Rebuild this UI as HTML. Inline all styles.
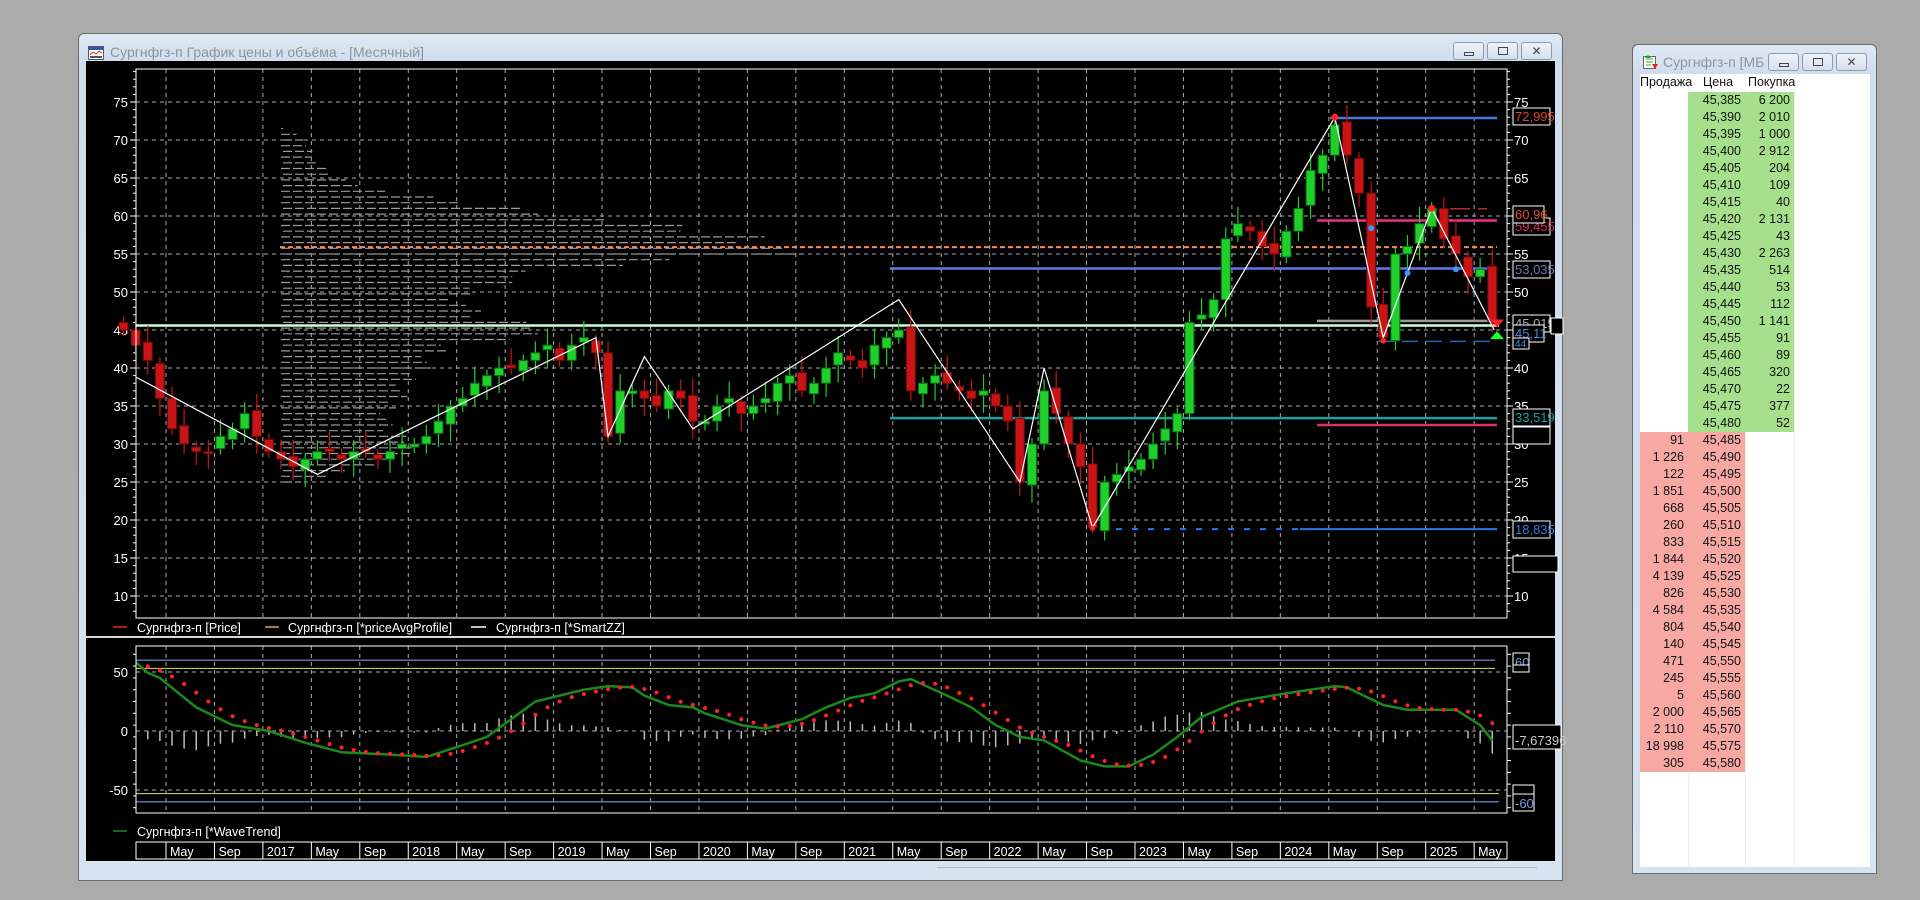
<!DOCTYPE html>
<html><head><meta charset="utf-8">
<style>
*{margin:0;padding:0;box-sizing:border-box}
body{width:1920px;height:900px;background:#ababab;position:relative;overflow:hidden;font-family:"Liberation Sans","DejaVu Sans",sans-serif}
.win{position:absolute;border:1px solid #6b6b6b;border-radius:6px 6px 0 0;background:linear-gradient(#dfe9f5,#cfdcec 30px,#d6e3f1);}
.title{position:absolute;font-size:14px;color:#8c939c;white-space:nowrap}
.btn{position:absolute;height:18px;width:31px;border:1px solid #8c9cb0;border-radius:3px;background:linear-gradient(#eef3f9,#d5dfeb)}
.ob{position:absolute;left:1640px;top:74px;width:230px;height:793px;background:#fff;font-size:12.5px;color:#111}
.ob .col{position:absolute;top:18px}
.ob .r{height:17px;line-height:17px;text-align:right;padding-right:4px}
</style></head><body>

<div class="win" style="left:78px;top:33px;width:1485px;height:848px"></div>
<svg style="position:absolute;left:88px;top:46px" width="16" height="14"><rect x="0.5" y="0.5" width="15" height="13" fill="#fff" stroke="#557"/><rect x="1" y="1" width="14" height="3" fill="#2a5fa8"/><polyline points="2,9 5,6 8,8 11,5 14,7" fill="none" stroke="#c33"/><rect x="2" y="10" width="12" height="2" fill="#555"/></svg>
<div class="title" style="left:110px;top:44px">Сургнфгз-п График цены и объёма - [Месячный]</div>
<div class="btn" style="left:1453px;top:42px"><div style="position:absolute;left:10px;top:9px;width:10px;height:4px;border:1px solid #445"></div></div>
<div class="btn" style="left:1487px;top:42px"><div style="position:absolute;left:10px;top:4px;width:10px;height:8px;border:1px solid #445"></div></div>
<div class="btn" style="left:1521px;top:42px;font-size:12px;color:#445;text-align:center;line-height:16px">✕</div>
<div style="position:absolute;left:86px;top:61px;width:1469px;height:800px;background:#000"></div>
<div style="position:absolute;left:937px;top:867px;width:600px;height:1px;background:#b8b8b8"></div>

<svg id="ch" style="position:absolute;left:0;top:0" width="1920" height="900" font-family="Liberation Sans, sans-serif"></svg>

<div class="win" style="left:1632px;top:44px;width:245px;height:830px"></div>
<svg style="position:absolute;left:1643px;top:55px" width="16" height="16"><rect x="0.5" y="1.5" width="12" height="12" fill="#fff" stroke="#666"/><path d="M3 4h7M3 7h7M3 10h5" stroke="#3a3"/><path d="M9 9l3 5 3-5z" fill="#d22"/><path d="M2 3l3-3 3 3z" fill="#2a2"/></svg>
<div class="title" style="left:1663px;top:54px">Сургнфгз-п [МБ ...</div>
<div class="btn" style="left:1768px;top:53px"><div style="position:absolute;left:10px;top:9px;width:10px;height:4px;border:1px solid #445"></div></div>
<div class="btn" style="left:1802px;top:53px"><div style="position:absolute;left:10px;top:4px;width:10px;height:8px;border:1px solid #445"></div></div>
<div class="btn" style="left:1836px;top:53px;font-size:12px;color:#445;text-align:center;line-height:16px">✕</div>
<div class="ob">
 <div style="position:absolute;left:48px;top:0;width:1px;height:793px;background:#eee"></div>
 <div style="position:absolute;left:105px;top:0;width:1px;height:793px;background:#eee"></div>
 <div style="position:absolute;left:154px;top:0;width:1px;height:793px;background:#eee"></div>
 <div style="position:absolute;left:0;top:1px;width:48px;font-size:12.5px">Продажа</div>
 <div style="position:absolute;left:63px;top:1px">Цена</div>
 <div style="position:absolute;left:108px;top:1px">Покупка</div>
 <div class="col" id="c1" style="left:0;width:48px"></div>
 <div class="col" id="c2" style="left:48px;width:57px"></div>
 <div class="col" id="c3" style="left:105px;width:49px"></div>
</div>

<script>
(function(){
 var buy=["6 200","2 010","1 000","2 912","204","109","40","2 131","43","2 263","514","53","112","1 141","91","89","320","22","377","52"];
 var sell=["91","1 226","122","1 851","668","260","833","1 844","4 139","826","4 584","804","140","471","245","5","2 000","2 110","18 998","305"];
 var c1="",c2="",c3="";
 for(var i=0;i<40;i++){
  var p=(45.385+i*0.005).toFixed(3).replace(".",",");
  var g=i<20, col=g?"#a6e08c":"#f7a8a3";
  c2+='<div class="r" style="background:'+col+'">'+p+'</div>';
  if(g){c1+='<div class="r"></div>';c3+='<div class="r" style="background:#a6e08c">'+buy[i]+'</div>';}
  else{c1+='<div class="r" style="background:#f7a8a3">'+sell[i-20]+'</div>';}
 }
 document.getElementById("c1").innerHTML=c1;document.getElementById("c2").innerHTML=c2;document.getElementById("c3").innerHTML=c3;
})();
(function(){
 var s="";
 var L=136,R=1507,T=69,B=618;
 function Y(p){return 102+(75-p)*7.6;}
 function X(i){return 166+48.45*((i-4)/4)+6;}
 function line(x1,y1,x2,y2,c,w,d){s+='<line x1="'+x1+'" y1="'+y1+'" x2="'+x2+'" y2="'+y2+'" stroke="'+c+'" stroke-width="'+(w||1)+'"'+(d?' stroke-dasharray="'+d+'"':'')+'/>';}
 function txt(x,y,t,c,sz,a){s+='<text x="'+x+'" y="'+y+'" fill="'+c+'" font-size="'+(sz||13)+'"'+(a?' text-anchor="'+a+'"':'')+'>'+t+'</text>';}
 function rect(x,y,w,h,f,st){s+='<rect x="'+x+'" y="'+y+'" width="'+w+'" height="'+h+'" fill="'+(f||"none")+'"'+(st?' stroke="'+st+'"':'')+'/>';}
 for(var p=10;p<=75;p+=5){line(L,Y(p),R,Y(p),"#aaa",1,"4 4");txt(128,Y(p)+5,p,"#fff",13,"end");txt(1514,Y(p)+5,p,"#fff",13);}
 for(var p=8;p<=79;p++){var k=p%5==0?6:3;line(L-k,Y(p),L,Y(p),"#fff");line(R,Y(p),R+k,Y(p),"#fff");}
 for(var k=0;k<28;k++){var x=166+48.45*k;line(x,T,x,B,"#aaa",1,"4 4");line(x,646,x,813,"#aaa",1,"4 4");}
 var vp=[[71,15],[69,30],[67,40],[65,60],[63,120],[61,250],[60,320],[58,450],[57,520],[56,550],[55,520],[53,300],[52,250],[50,200],[47,200],[45,310],[43,180],[40,150],[37,130],[35,120],[32,110],[30,150],[28,120],[26,60],[25,20]];
 function vl(p){for(var j=0;j<vp.length-1;j++){if(p<=vp[j][0]&&p>=vp[j+1][0]){var t=(vp[j][0]-p)/(vp[j][0]-vp[j+1][0]);return vp[j][1]+(vp[j+1][1]-vp[j][1])*t;}}return 0;}
 var n=0;
 for(var p=71.5;p>=24.5;p-=0.75){var l=vl(p)*(0.85+0.15*((n*7)%5)/4);n++;line(281+(n%2)*2,Y(p),281+l,Y(p),"#9a9a9a",1.2,"9 3");}
 line(L,Y(45.6),R-8,Y(45.6),"#c8ffd8",2.5);
 line(280,Y(55.9),R-10,Y(55.9),"#f08c4c",2,"5 3");
 line(890,Y(53.1),R-10,Y(53.1),"#5a78f0",2.5);
 line(890,Y(33.4),R-10,Y(33.4),"#19a0a0",2.5);
 line(1317,Y(32.5),R-10,Y(32.5),"#e0306a",2.5);
 line(1090,Y(18.8),R-10,Y(18.8),"#2a78e0",2,"");
 line(1090,Y(18.8),1300,Y(18.8),"#000",2,"10 6");
 line(1330,Y(72.9),R-10,Y(72.9),"#4a78e0",2.5);
 line(1317,Y(59.4),R-10,Y(59.4),"#f0308a",2.5);
 line(1317,Y(46.2),R-10,Y(46.2),"#999",2.5);
 line(1378,Y(43.5),R-10,Y(43.5),"#2a60c0",1.5,"16 8");
 line(1450,Y(60.96),R-20,Y(60.96),"#b03020",1.5,"20 8");
 var c=[45,43,41,36,32,30,29,29,31,32,34,31, 29,28,27,28,29,29,28,29,29,28,29,30, 30,31,33,35,36,38,39,40,40,41,42,43, 41,43,44,42,31,37,37,36,35,37,36,33, 33,35,36,34,35,36,38,39,37,38,40,42, 41,40,43,44,45,37,38,39,38,37,36,37, 35,33,25,30,37,34,30,27,19,25,26,27, 28,30,32,34,46,47,49,57,59,58,56,55, 58,61,66,68,72,68,63,48,44,55,56,59, 61,57,55,52,53,46];
 for(var i=0;i<c.length;i++){var cl=c[i],op=(i==0?46:c[i-1]+((i%3)-1)*0.4);var up=cl>op;
  var h=Math.max(op,cl)+0.8+(i%3)*0.7,lo=Math.min(op,cl)-0.8-(i%4)*0.5;var x=X(i);
  var col=up?"#1fcf2a":"#c81414",bc=up?"#0a6a10":"#6a0a0a";
  line(x,Y(h),x,Y(lo),col,1.2);
  var y1=Y(Math.max(op,cl)),hh=Math.max(2,Y(Math.min(op,cl))-y1);
  s+='<rect x="'+(x-4.5)+'" y="'+y1+'" width="9" height="'+hh+'" fill="'+col+'" stroke="'+bc+'"/>';}
 var zz=[[L,38.8],[X(16),26],[X(39),44],[X(40),31],[X(43),41.5],[X(47),32],[X(64),49],[X(74),25],[X(76),40],[X(80),19],[X(100),73],[X(104),44],[X(108),61],[X(113)+2,45]];
 var pts=zz.map(function(q){return q[0]+","+Y(q[1]);}).join(" ");
 s+='<polyline points="'+pts+'" fill="none" stroke="#fff" stroke-width="1.2"/>';
 s+='<circle cx="'+X(100)+'" cy="'+Y(73)+'" r="3.5" fill="#f22"/><circle cx="'+X(108)+'" cy="'+Y(61)+'" r="3.5" fill="#f22"/><circle cx="'+X(104)+'" cy="'+Y(43.6)+'" r="3" fill="#f22"/><circle cx="'+X(80)+'" cy="'+Y(18.9)+'" r="2.5" fill="#f22"/>';
 s+='<circle cx="'+X(103)+'" cy="'+Y(58.4)+'" r="3" fill="#39f"/><circle cx="'+X(106)+'" cy="'+Y(52.5)+'" r="3" fill="#39f"/><circle cx="'+X(110)+'" cy="'+Y(53)+'" r="3" fill="#39f"/>';
 s+='<polygon points="1490,'+(Y(45.6)-6)+' 1504,'+(Y(45.6)-6)+' 1497,'+(Y(45.6)+2)+'" fill="#f22"/><polygon points="1490,'+(Y(44.2)+3)+' 1504,'+(Y(44.2)+3)+' 1497,'+(Y(44.2)-5)+'" fill="#2f2"/>';
 rect(L,T,R-L,B-T,"none","#fff");
 function lab(y,t,c,w){rect(1513,y,w||37,17,"#000","#fff");txt(1515,y+13,t,c,13);}
 lab(108,"72,995","#e0402a");lab(218,"59,455","#e02a6a");lab(206,"60,96","#e0502a",31);lab(261,"53,035","#6a7aba");
 lab(315,"45,015","#aaa");lab(325,"45,11","#4a8ad8",31);rect(1513,338,16,11,"#000","#fff");txt(1515,347,"44","#4a8ad8",10);
 rect(1551,318,12,16,"#000","#fff");
 lab(409,"33,519","#19a0a0");rect(1513,427,37,17,"#000","#fff");lab(521,"18,835","#3a7ad8");rect(1513,556,45,16,"#000","#fff");
 line(113,627,127,627,"#d22",1.5);txt(137,632,"Сургнфгз-п [Price]","#fff",12.5);
 line(265,627,279,627,"#d8a080",1.5);txt(288,632,"Сургнфгз-п [*priceAvgProfile]","#fff",12.5);
 line(471,627,486,627,"#fff",1.5);txt(496,632,"Сургнфгз-п [*SmartZZ]","#fff",12.5);
 rect(86,636,1469,2,"#d8d8d8");
 function V(v){return 731-v*1.18;}
 var IT=646,IB=813;
 line(L,V(0),R,V(0),"#aaa",1,"4 4");line(L,V(50),R,V(50),"#aaa",1,"4 4");line(L,V(-50),R,V(-50),"#aaa",1,"4 4");
 line(L,V(60),R-12,V(60),"#7a96e0",1.2);line(L,V(53),R-12,V(53),"#c8c850",1.2);line(L,V(-53),R-8,V(-53),"#c8c850",1.2);line(L,V(-60),R-8,V(-60),"#7a96e0",1.2);
 txt(128,V(50)+5,"50","#fff",13,"end");txt(128,V(0)+5,"0","#fff",13,"end");txt(128,V(-50)+5,"-50","#fff",13,"end");
 for(var v=-65;v<=65;v+=10){line(R,V(v),R+4,V(v),"#fff");line(L-3,V(v),L,V(v),"#fff");}
 var kp=[[0,58],[3,45],[6,20],[9,5],[12,0],[15,-10],[18,-18],[22,-20],[25,-22],[28,-12],[30,-5],[32,10],[34,25],[36,30],[38,35],[40,38],[42,37],[43,30],[45,22],[47,20],[48,15],[51,5],[53,2],[56,10],[58,20],[60,28],[62,32],[64,42],[65,44],[68,30],[70,20],[72,5],[74,-5],[76,-8],[79,-25],[81,-30],[83,-30],[85,-20],[87,-5],[89,12],[92,25],[96,32],[100,38],[101,37],[104,22],[106,18],[110,18],[112,5],[113,-8]];
 var wt=[];for(var i=0;i<114;i++){for(var j=0;j<kp.length-1;j++){if(i>=kp[j][0]&&i<=kp[j+1][0]){var t=(i-kp[j][0])/(kp[j+1][0]-kp[j][0]||1);wt[i]=kp[j][1]+(kp[j+1][1]-kp[j][1])*t;break;}}}
 var sig=[];for(var i=0;i<114;i++){var a=0,m=0;for(var q=i-3;q<=i;q++){a+=wt[Math.max(0,q)];m++;}sig[i]=a/m;}
 for(var i=0;i<114;i++){var d=(wt[i]-sig[i])*1.3;if(X(i)>L&&Math.abs(d)>0.5)line(X(i),V(0),X(i),V(d),"#bbb",1.5);}
 var wp=[];for(var i=0;i<114;i++){if(X(i)>=L)wp.push(X(i)+","+V(wt[i]));}
 s+='<polyline points="'+L+','+V(58)+' '+wp.join(" ")+'" fill="none" stroke="#1a8a1a" stroke-width="2.5"/>';
 for(var i=0;i<114;i++){if(X(i)>L)s+='<circle cx="'+X(i)+'" cy="'+V(sig[i])+'" r="2" fill="#f22"/>';}
 rect(L,IT,R-L,IB-IT,"none","#fff");
 rect(1513,653,16,17,"#000","#fff");txt(1515,667,"60","#7a9ae0",13);rect(1513,665,16,7,"#000","#fff");
 rect(1513,725,48,24,"#000","#fff");txt(1515,745,"-7,67396","#ccc",13);
 rect(1513,785,21,10,"#000","#fff");rect(1513,794,21,17,"#000","#fff");txt(1515,808,"-60","#7a9ae0",13);
 line(113,831,127,831,"#1a8a1a",1.5);txt(137,836,"Сургнфгз-п [*WaveTrend]","#fff",12.5);
 rect(L,842,R-L,17,"#000","#fff");
 var dl=["May","Sep","2017","May","Sep","2018","May","Sep","2019","May","Sep","2020","May","Sep","2021","May","Sep","2022","May","Sep","2023","May","Sep","2024","May","Sep","2025","May"];
 for(var k=0;k<28;k++){var x=166+48.45*k;line(x,842,x,859,"#fff");txt(x+4,856,dl[k],"#fff",12.5);}
 document.getElementById("ch").innerHTML=s;
})();
</script>
</body></html>
